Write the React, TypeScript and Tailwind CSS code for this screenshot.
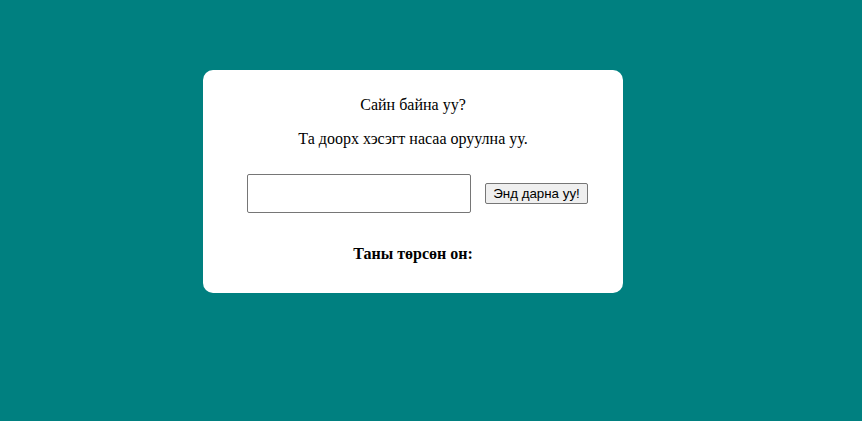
import React from 'react';

export default function App() {
  return (
    <div className="w-[862px] h-[421px] bg-[#008080] pt-[70px] pl-[203px] font-['Liberation_Serif',serif] text-black">
      <div className="w-[420px] h-[223px] bg-white rounded-[10px] flex flex-col items-center">
        <p className="mt-[26px] text-[16px] leading-[18px]">Сайн байна уу?</p>
        <p className="mt-[16px] text-[16px] leading-[18px]">Та доорх хэсэгт насаа оруулна уу.</p>
        <div className="mt-[26px] flex items-center gap-[14px] pl-[9px]">
          <input
            type="text"
            className="w-[224px] h-[39px] border border-[#767676] rounded-[2px] bg-white outline-none"
          />
          <button className="w-[103px] h-[21px] border border-[#767676] rounded-[2px] bg-[#efefef] font-['Liberation_Sans',sans-serif] text-[13.33px] leading-none text-black">
            Энд дарна уу!
          </button>
        </div>
        <p className="mt-[32px] text-[16px] leading-[18px] font-bold">Таны төрсөн он:</p>
      </div>
    </div>
  );
}
